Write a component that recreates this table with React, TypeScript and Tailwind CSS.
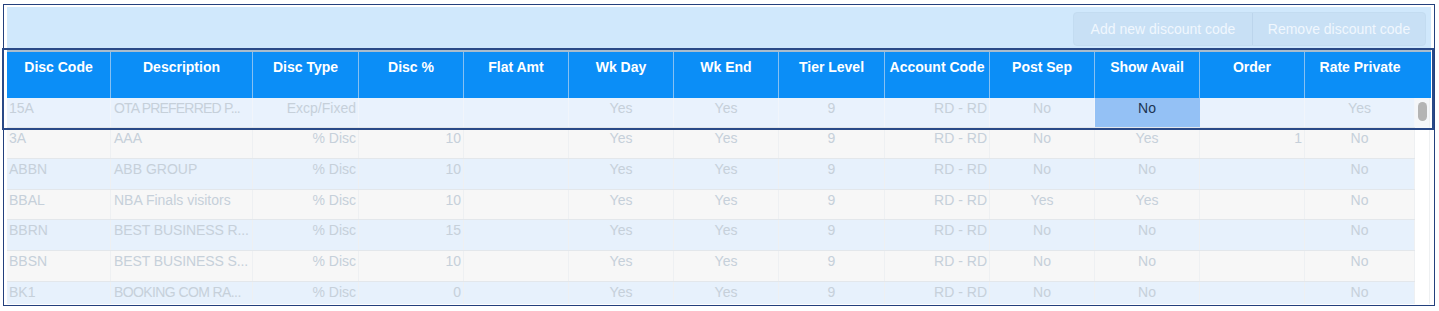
const COLS = [
  { label: 'Disc Code', w: 'w-[104px]', align: 'text-left' },
  { label: 'Description', w: 'w-[142px]', align: 'text-left' },
  { label: 'Disc Type', w: 'w-[106px]', align: 'text-right' },
  { label: 'Disc %', w: 'w-[105px]', align: 'text-right' },
  { label: 'Flat Amt', w: 'w-[105px]', align: 'text-right' },
  { label: 'Wk Day', w: 'w-[105px]', align: 'text-center' },
  { label: 'Wk End', w: 'w-[105px]', align: 'text-center' },
  { label: 'Tier Level', w: 'w-[106px]', align: 'text-center' },
  { label: 'Account Code', w: 'w-[105px]', align: 'text-right' },
  { label: 'Post Sep', w: 'w-[105px]', align: 'text-center' },
  { label: 'Show Avail', w: 'w-[105px]', align: 'text-center' },
  { label: 'Order', w: 'w-[105px]', align: 'text-right' },
  { label: 'Rate Private', w: 'w-[110px]', align: 'text-center' },
]

const ROWS = [
  ['15A', 'OTA PREFERRED P...', 'Excp/Fixed', '', '', 'Yes', 'Yes', '9', 'RD - RD', 'No', 'No', '', 'Yes'],
  ['3A', 'AAA', '% Disc', '10', '', 'Yes', 'Yes', '9', 'RD - RD', 'No', 'Yes', '1', 'No'],
  ['ABBN', 'ABB GROUP', '% Disc', '10', '', 'Yes', 'Yes', '9', 'RD - RD', 'No', 'No', '', 'No'],
  ['BBAL', 'NBA Finals visitors', '% Disc', '10', '', 'Yes', 'Yes', '9', 'RD - RD', 'Yes', 'Yes', '', 'No'],
  ['BBRN', 'BEST BUSINESS R...', '% Disc', '15', '', 'Yes', 'Yes', '9', 'RD - RD', 'No', 'No', '', 'No'],
  ['BBSN', 'BEST BUSINESS S...', '% Disc', '10', '', 'Yes', 'Yes', '9', 'RD - RD', 'No', 'No', '', 'No'],
  ['BK1', 'BOOKING COM RA...', '% Disc', '0', '', 'Yes', 'Yes', '9', 'RD - RD', 'No', 'No', '', 'No'],
]

// squeeze the pre-cut descriptions so they fill the column like the original
const DESC_TRACK = [
  'tracking-[-0.8px]',
  '',
  '',
  '',
  'tracking-[-0.1px]',
  'tracking-[-0.1px]',
  'tracking-[-0.6px]',
]

const ROW_H = ['h-[30px]', 'h-[31px]', 'h-[31px]', 'h-[30px]', 'h-[31px]', 'h-[31px]', 'h-[31px]']

export default function App() {
  return (
    <div className="relative w-[1439px] h-[311px] bg-white overflow-hidden font-['Liberation_Sans',Arial,sans-serif] text-[14px] leading-[20px]">
      {/* Grid frame */}
      <div className="ml-[3px] mt-[4px] w-[1432px] h-[302px] border border-[#23407d] px-[3px] pt-[2px] pb-[1px] flex flex-col">
        {/* Toolbar */}
        <div className="h-[41px] flex-shrink-0 bg-[#d0e8fc] flex justify-end items-start pt-[5px] pr-[5px]">
          <div className="flex h-[34px] rounded-[4px] border border-[#c3dcf1] bg-[#c8e0f5] text-[#f0f7fe]">
            <button className="w-[179px] h-full flex items-center justify-center border-r border-[#bcd5ec]">
              Add new discount code
            </button>
            <button className="w-[172px] h-full flex items-center justify-center">
              Remove discount code
            </button>
          </div>
        </div>

        {/* Header */}
        <div className="h-[50px] flex-shrink-0 flex bg-[#0b8ef7] border-t-4 border-[#a9bccd]">
          {COLS.map((c, j) => (
            <div
              key={c.label}
              className={`${c.w} flex-shrink-0 h-full pt-[5px] text-center font-bold text-white ${
                j < COLS.length - 1 ? 'border-r border-[#86c0f2]' : ''
              }`}
            >
              {c.label}
            </div>
          ))}
          <div className="flex-1" />
        </div>

        {/* Body */}
        <div className="flex-1 flex overflow-hidden">
          <div className="w-[1408px] flex-shrink-0">
            {ROWS.map((r, i) => (
              <div
                key={r[0]}
                className={`${ROW_H[i]} flex border-b border-[#e3e7eb] ${
                  i === 0 ? 'bg-[#e9f2fd]' : i % 2 === 1 ? 'bg-[#f7f7f7]' : 'bg-[#e7f1fc]'
                }`}
              >
                {r.map((v, j) => {
                  const selected = i === 0 && j === 10
                  return (
                    <div
                      key={j}
                      className={`${COLS[j].w} ${COLS[j].align} flex-shrink-0 h-full px-[2px] whitespace-nowrap border-r ${
                        j === 1 ? `pl-[3px] ${DESC_TRACK[i]}` : ''
                      } ${
                        selected
                          ? 'bg-[#94c1f5] text-[#1c3553] border-[#94c1f5]'
                          : i === 0
                          ? 'text-[#c6d0da] border-[#f1f5fb]'
                          : 'text-[#c6d0da] border-[#eef0f2]'
                      }`}
                    >
                      {v}
                    </div>
                  )
                })}
              </div>
            ))}
          </div>
          {/* Scrollbar */}
          <div className="w-[15px] flex-shrink-0 bg-white border-r border-[#eef0f2]">
            <div className="h-[30px] bg-[#f4f6f9] pt-[4px] pl-[3px]">
              <div className="w-[9px] h-[19px] rounded-full bg-[#b4b4b4]" />
            </div>
          </div>
        </div>
      </div>

      {/* Focus outline around header + first row */}
      <div className="absolute left-[2px] top-[48px] w-[1432px] h-[82px] border-2 border-[#2a4a88] pointer-events-none" />
    </div>
  )
}
